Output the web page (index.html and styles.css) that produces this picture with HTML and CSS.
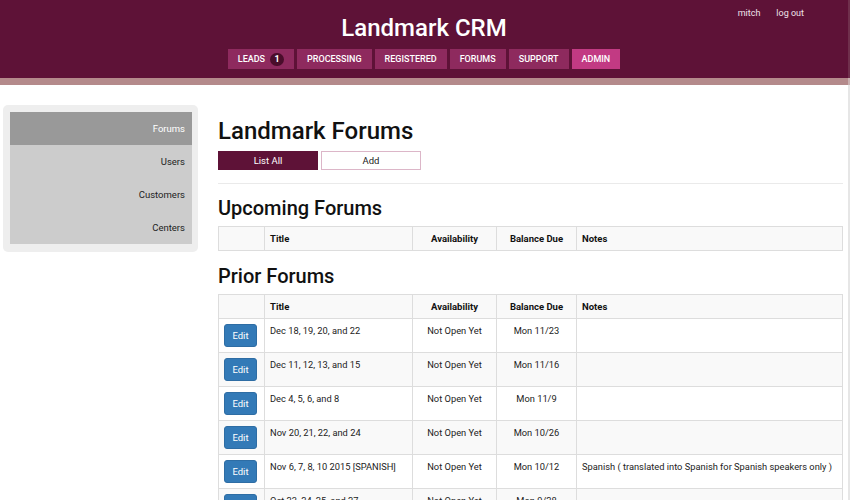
FILE: index.html
```html
<!DOCTYPE html>
<html>
<head>
<meta charset="utf-8">
<link rel="stylesheet" href="styles.css">
</head>
<body>
<header class="topbar">
  <div class="user-links"><a href="#">mitch</a><a href="#">log out</a></div>
  <div class="brand">Landmark CRM</div>
  <nav class="mainnav">
    <a class="navbtn" href="#">LEADS <span class="badge">1</span></a>
    <a class="navbtn" href="#">PROCESSING</a>
    <a class="navbtn" href="#">REGISTERED</a>
    <a class="navbtn" href="#">FORUMS</a>
    <a class="navbtn" href="#">SUPPORT</a>
    <a class="navbtn navbtn-active" href="#">ADMIN</a>
  </nav>
</header>
<div class="stripe"></div>
<div class="layout">
  <aside class="sidebar">
    <a class="side-item side-active" href="#">Forums</a>
    <a class="side-item" href="#">Users</a>
    <a class="side-item" href="#">Customers</a>
    <a class="side-item" href="#">Centers</a>
  </aside>
  <main class="content">
    <h1 class="page-title">Landmark Forums</h1>
    <div class="tabs">
      <a class="tab tab-active" href="#">List All</a>
      <a class="tab" href="#">Add</a>
    </div>
    <hr class="divider">
    <h2 class="section-title">Upcoming Forums</h2>
    <table class="grid">
      <tr class="head"><th class="c-edit"></th><th class="c-title">Title</th><th class="c-avail">Availability</th><th class="c-bal">Balance Due</th><th class="c-notes">Notes</th></tr>
    </table>
    <h2 class="section-title">Prior Forums</h2>
    <table class="grid">
      <tr class="head"><th class="c-edit"></th><th class="c-title">Title</th><th class="c-avail">Availability</th><th class="c-bal">Balance Due</th><th class="c-notes">Notes</th></tr>
      <tr><td class="c-edit"><a class="edit" href="#">Edit</a></td><td class="c-title">Dec 18, 19, 20, and 22</td><td class="c-avail">Not Open Yet</td><td class="c-bal">Mon 11/23</td><td class="c-notes"></td></tr>
      <tr class="alt"><td class="c-edit"><a class="edit" href="#">Edit</a></td><td class="c-title">Dec 11, 12, 13, and 15</td><td class="c-avail">Not Open Yet</td><td class="c-bal">Mon 11/16</td><td class="c-notes"></td></tr>
      <tr><td class="c-edit"><a class="edit" href="#">Edit</a></td><td class="c-title">Dec 4, 5, 6, and 8</td><td class="c-avail">Not Open Yet</td><td class="c-bal">Mon 11/9</td><td class="c-notes"></td></tr>
      <tr class="alt"><td class="c-edit"><a class="edit" href="#">Edit</a></td><td class="c-title">Nov 20, 21, 22, and 24</td><td class="c-avail">Not Open Yet</td><td class="c-bal">Mon 10/26</td><td class="c-notes"></td></tr>
      <tr><td class="c-edit"><a class="edit" href="#">Edit</a></td><td class="c-title">Nov 6, 7, 8, 10 2015 [SPANISH]</td><td class="c-avail">Not Open Yet</td><td class="c-bal">Mon 10/12</td><td class="c-notes">Spanish ( translated into Spanish for Spanish speakers only )</td></tr>
      <tr class="alt"><td class="c-edit"><a class="edit" href="#">Edit</a></td><td class="c-title">Oct 23, 24, 25, and 27</td><td class="c-avail">Not Open Yet</td><td class="c-bal">Mon 9/28</td><td class="c-notes"></td></tr>
    </table>
  </main>
</div>
</body>
</html>
```
FILE: styles.css
```css
* { box-sizing: border-box; }
html, body { margin: 0; padding: 0; background: #fff; }
body {
  font-family: Roboto, "Liberation Sans", Arial, sans-serif;
  font-size: 9.5px;
  color: #222;
  overflow: hidden;
  height: 500px;
}
a { text-decoration: none; color: inherit; }

.topbar {
  position: relative;
  background: #5e1237;
  height: 78px;
  padding-top: 13px;
  display: flex;
  flex-direction: column;
  align-items: center;
  border-right: 2px solid #6f2f4c;
}
.user-links {
  position: absolute;
  top: 8px;
  right: 44px;
  display: flex;
  gap: 16px;
  font-family: Roboto, "Liberation Sans", sans-serif;
  font-size: 9px;
  color: #f0e2ea;
}
.brand {
  font-family: Roboto, sans-serif;
  font-weight: 500;
  font-size: 24px;
  line-height: 30px;
  color: #fff;
}
.mainnav {
  margin-top: 6px;
  display: flex;
  gap: 3px;
}
.navbtn {
  height: 20px;
  display: flex;
  align-items: center;
  gap: 5px;
  padding: 0 10px;
  background: #8e2a5e;
  color: #fff;
  font-family: Roboto, sans-serif;
  font-weight: 500;
  font-size: 9px;
}
.navbtn-active { background: #c23a83; }
.badge {
  display: inline-flex;
  align-items: center;
  justify-content: center;
  width: 14px;
  height: 13px;
  border-radius: 7px;
  background: #4a0d2b;
  font-size: 9px;
  font-weight: 700;
}
.stripe { height: 7px; background: #b48a8b; border-right: 2px solid #c9b0b0; }

.layout {
  display: flex;
  align-items: flex-start;
  padding: 20px 5px 0 3px;
  gap: 20px;
  height: 415px;
  border-right: 2px solid #e6e6e6;
}
.sidebar {
  width: 195px;
  flex: none;
  background: #eeeeee;
  border-radius: 5px;
  padding: 7px 6px 8px 7px;
  display: flex;
  flex-direction: column;
}
.side-item {
  height: 33px;
  display: flex;
  align-items: center;
  justify-content: flex-end;
  padding-right: 7px;
  background: #cccccc;
  color: #222;
  font-size: 9.5px;
}
.side-active { background: #999999; color: #fff; }

.content { flex: 1; min-width: 0; padding-top: 11px; }
.page-title {
  margin: 0;
  font-family: Roboto, sans-serif;
  font-weight: 500;
  font-size: 24px;
  line-height: 30px;
  color: #111;
}
.tabs { margin-top: 5px; display: flex; gap: 3px; }
.tab {
  width: 100px;
  height: 19px;
  display: flex;
  align-items: center;
  justify-content: center;
  border: 1px solid #dcb6c8;
  background: #fff;
  color: #222;
  font-size: 9.5px;
}
.tab-active { background: #5e1237; border-color: #5e1237; color: #fff; }
.divider {
  margin: 13px 0 0 0;
  border: 0;
  border-top: 1px solid #eaeaea;
}
.section-title {
  margin: 11px 0 5px 0;
  font-family: Roboto, sans-serif;
  font-weight: 500;
  font-size: 20px;
  line-height: 26px;
  color: #111;
}
.grid + .section-title { margin-top: 12px; }
.grid {
  width: 100%;
  border-collapse: collapse;
  table-layout: fixed;
}
.grid th, .grid td {
  border: 1px solid #dddddd;
  padding: 6px 5px 5px 5px;
  vertical-align: top;
  line-height: 12px;
  text-align: left;
  font-size: 9.3px;
}
.grid th { font-weight: 700; height: 24px; vertical-align: middle; color: #111; padding: 5px; font-size: 9.5px; }
.grid td { height: 34px; }
.grid .head { background: #f9f9f9; }
.grid .alt { background: #f9f9f9; }
.c-edit { width: 46px; }
.c-title { width: 148px; }
.c-avail { width: 84px; text-align: center !important; }
.c-bal { width: 80px; text-align: center !important; }
.grid td.c-edit { padding: 5px 5px 0 5px; }
.edit {
  display: flex;
  align-items: center;
  justify-content: center;
  width: 33px;
  height: 23px;
  background: #337ab7;
  border: 1px solid #2e6da4;
  border-radius: 3px;
  color: #fff;
  font-size: 9.5px;
}
```
